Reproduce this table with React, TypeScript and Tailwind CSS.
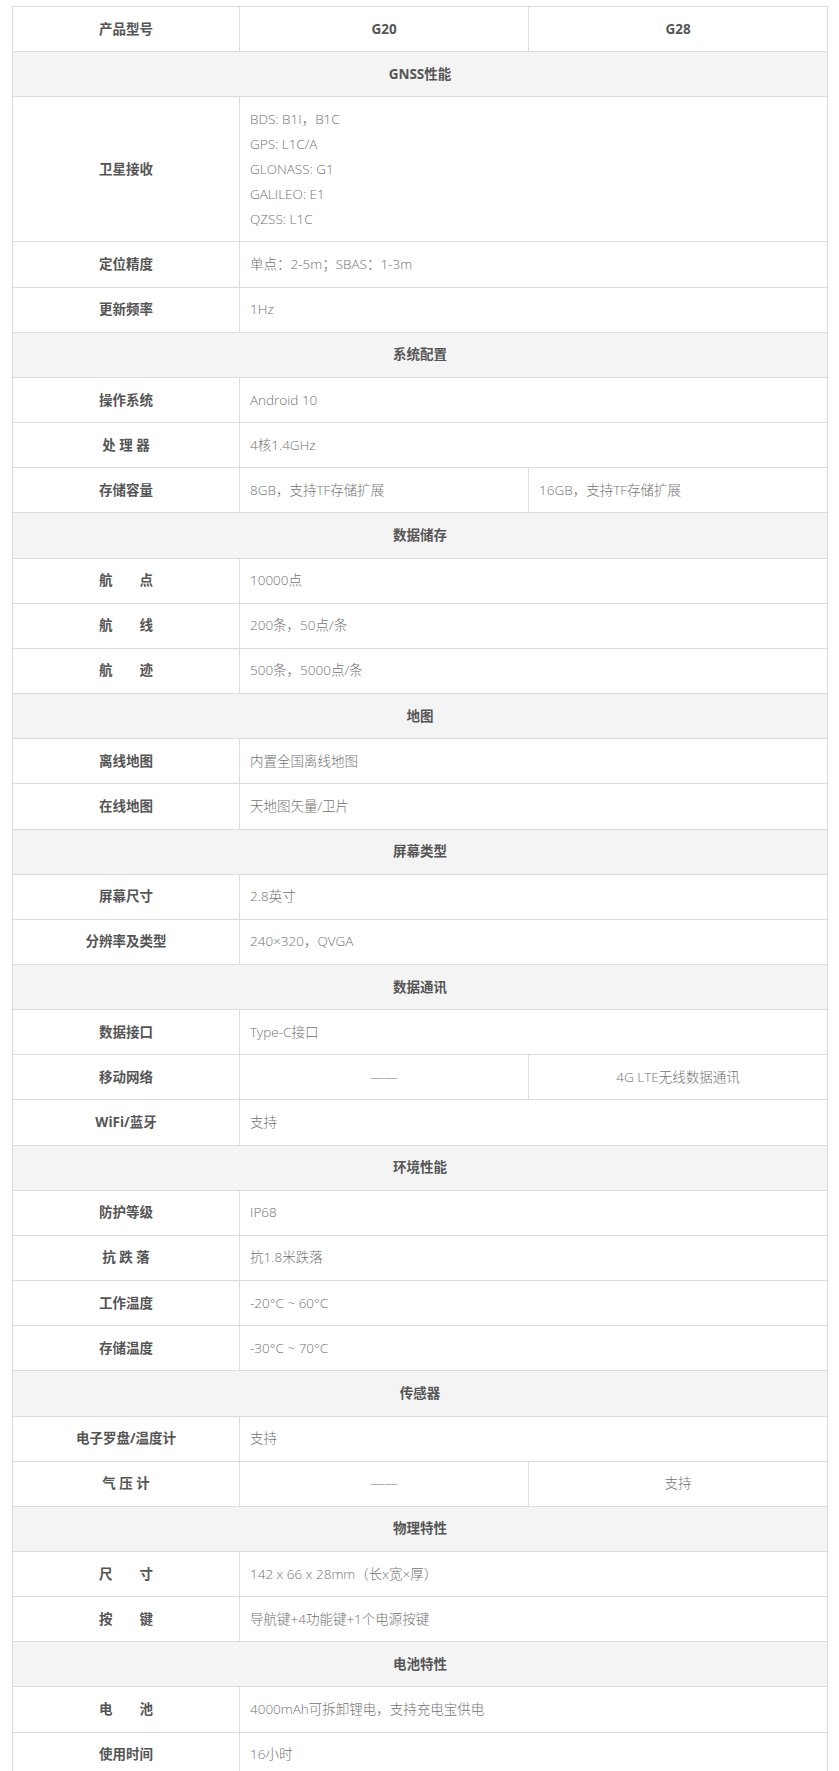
import React from "react";

type Row =
  | { kind: "group"; title: string }
  | { kind: "row"; label: string; value: React.ReactNode }
  | { kind: "split"; label: string; a: string; b: string; center?: boolean };

const rows: Row[] = [
  { kind: "group", title: "GNSS性能" },
  {
    kind: "row",
    label: "卫星接收",
    value: (
      <>
        BDS: B1I，B1C
        <br />
        GPS: L1C/A
        <br />
        GLONASS: G1
        <br />
        GALILEO: E1
        <br />
        QZSS: L1C
      </>
    ),
  },
  { kind: "row", label: "定位精度", value: "单点：2-5m；SBAS：1-3m" },
  { kind: "row", label: "更新频率", value: "1Hz" },
  { kind: "group", title: "系统配置" },
  { kind: "row", label: "操作系统", value: "Android 10" },
  { kind: "row", label: "处 理 器", value: "4核1.4GHz" },
  { kind: "split", label: "存储容量", a: "8GB，支持TF存储扩展", b: "16GB，支持TF存储扩展" },
  { kind: "group", title: "数据储存" },
  { kind: "row", label: "航\u3000\u3000点", value: "10000点" },
  { kind: "row", label: "航\u3000\u3000线", value: "200条，50点/条" },
  { kind: "row", label: "航\u3000\u3000迹", value: "500条，5000点/条" },
  { kind: "group", title: "地图" },
  { kind: "row", label: "离线地图", value: "内置全国离线地图" },
  { kind: "row", label: "在线地图", value: "天地图矢量/卫片" },
  { kind: "group", title: "屏幕类型" },
  { kind: "row", label: "屏幕尺寸", value: "2.8英寸" },
  { kind: "row", label: "分辨率及类型", value: "240×320，QVGA" },
  { kind: "group", title: "数据通讯" },
  { kind: "row", label: "数据接口", value: "Type-C接口" },
  { kind: "split", label: "移动网络", a: "——", b: "4G LTE无线数据通讯", center: true },
  { kind: "row", label: "WiFi/蓝牙", value: "支持" },
  { kind: "group", title: "环境性能" },
  { kind: "row", label: "防护等级", value: "IP68" },
  { kind: "row", label: "抗 跌 落", value: "抗1.8米跌落" },
  { kind: "row", label: "工作温度", value: "-20°C ~ 60°C" },
  { kind: "row", label: "存储温度", value: "-30°C ~ 70°C" },
  { kind: "group", title: "传感器" },
  { kind: "row", label: "电子罗盘/温度计", value: "支持" },
  { kind: "split", label: "气 压 计", a: "——", b: "支持", center: true },
  { kind: "group", title: "物理特性" },
  { kind: "row", label: "尺\u3000\u3000寸", value: "142 x 66 x 28mm（长x宽×厚）" },
  { kind: "row", label: "按\u3000\u3000键", value: "导航键+4功能键+1个电源按键" },
  { kind: "group", title: "电池特性" },
  { kind: "row", label: "电\u3000\u3000池", value: "4000mAh可拆卸锂电，支持充电宝供电" },
  { kind: "row", label: "使用时间", value: "16小时" },
];

const cell = "border border-[#dcdcdc] py-[9.585px] px-[10px] leading-[25px] align-middle";
const labelCls = `${cell} text-center font-bold text-[#555]`;
const valCls = `${cell} text-left font-light text-[#727272]`;
const valCenterCls = `${cell} text-center font-light text-[#727272]`;

export default function App() {
  return (
    <div
      className="bg-white min-h-[1771px] pt-[6px] px-[12px]"
      style={{ fontFamily: '"Open Sans", "Noto Sans CJK SC", sans-serif' }}
    >
      <table className="w-[815px] table-fixed border-collapse text-[13.5px]">
        <colgroup>
          <col className="w-[227px]" />
          <col className="w-[289px]" />
          <col className="w-[299px]" />
        </colgroup>
        <tbody>
          <tr>
            <td className={labelCls}>产品型号</td>
            <td className={labelCls}>G20</td>
            <td className={labelCls}>G28</td>
          </tr>
          {rows.map((r, i) => {
            if (r.kind === "group") {
              return (
                <tr key={i} className="bg-[#f4f4f4]">
                  <td colSpan={3} className={labelCls}>
                    {r.title}
                  </td>
                </tr>
              );
            }
            if (r.kind === "row") {
              return (
                <tr key={i}>
                  <td className={labelCls}>{r.label}</td>
                  <td colSpan={2} className={valCls}>
                    {r.value}
                  </td>
                </tr>
              );
            }
            return (
              <tr key={i}>
                <td className={labelCls}>{r.label}</td>
                <td className={r.center ? valCenterCls : valCls}>{r.a}</td>
                <td className={r.center ? valCenterCls : valCls}>{r.b}</td>
              </tr>
            );
          })}
        </tbody>
      </table>
    </div>
  );
}
